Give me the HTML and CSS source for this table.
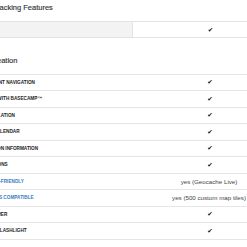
FILE: index.html
```
<!DOCTYPE html>
<html lang="en">
<head>
    <meta charset="UTF-8">
    <meta name="viewport" content="width=device-width, initial-scale=1.0">
    <title>Compare Features</title>
    <link rel="stylesheet" href="styles.css">
</head>
<body>
    <div class="page">
        <h2 class="section-title">Activity Tracking Features</h2>
        <table class="specs specs-boxed">
            <tr>
                <td class="label"></td>
                <td class="value"><span class="check">&#10004;</span></td>
            </tr>
        </table>

        <h2 class="section-title second">Route Creation</h2>
        <table class="specs">
            <tr>
                <td class="label">POINT-TO-POINT NAVIGATION</td>
                <td class="value"><span class="check">&#10004;</span></td>
            </tr>
            <tr>
                <td class="label">PLAN A TRIP WITH BASECAMP&trade;</td>
                <td class="value"><span class="check">&#10004;</span></td>
            </tr>
            <tr>
                <td class="label">AREA CALCULATION</td>
                <td class="value"><span class="check">&#10004;</span></td>
            </tr>
            <tr>
                <td class="label">HUNT/FISH CALENDAR</td>
                <td class="value"><span class="check">&#10004;</span></td>
            </tr>
            <tr>
                <td class="label">SUN AND MOON INFORMATION</td>
                <td class="value"><span class="check">&#10004;</span></td>
            </tr>
            <tr>
                <td class="label">WAYPOINT ICONS</td>
                <td class="value"><span class="check">&#10004;</span></td>
            </tr>
            <tr>
                <td class="label"><a href="#">GEOCACHING-FRIENDLY</a></td>
                <td class="value">yes (Geocache Live)</td>
            </tr>
            <tr>
                <td class="label"><a href="#">CUSTOM MAPS COMPATIBLE</a></td>
                <td class="value">yes (500 custom map tiles)</td>
            </tr>
            <tr>
                <td class="label">PICTURE VIEWER</td>
                <td class="value"><span class="check">&#10004;</span></td>
            </tr>
            <tr>
                <td class="label">BRIGHT LED FLASHLIGHT</td>
                <td class="value"><span class="check">&#10004;</span></td>
            </tr>
        </table>
    </div>
</body>
</html>
```
FILE: styles.css
```
body {
    margin: 0;
    overflow: hidden;
    background: #fff;
    font-family: "Liberation Sans", Arial, sans-serif;
    color: #222;
}
.page {
    margin-left: -41px;
    width: 328px;
}
.section-title {
    margin: 0 0 5px 0;
    padding-left: 8px;
    font-size: 7.5px;
    line-height: 16px;
    font-weight: normal;
    color: #333;
    -webkit-text-stroke: 0.15px #333;
}
.section-title.second {
    margin-top: 14.5px;
}
.specs {
    width: 328px;
    border-collapse: collapse;
    table-layout: fixed;
}
.specs td {
    height: 15.5px;
    padding: 0;
    border-top: 1px solid #e6e6e6;
    border-bottom: 1px solid #e6e6e6;
    vertical-align: middle;
}
.specs-boxed td {
    height: 15px;
    border: 1px solid #e3e3e3;
}
.specs-boxed .label {
    background-color: #f3f3f3;
}
.label {
    width: 164px;
    padding-left: 8px !important;
    font-size: 4.7px;
    font-weight: bold;
    color: #222;
    white-space: nowrap;
}
.label a {
    color: #3d7cc0;
    text-decoration: none;
}
.value {
    text-align: center;
    font-size: 6.2px;
    color: #444;
}
.check {
    display: inline-block;
    margin-left: 2px;
    font-family: "DejaVu Sans", sans-serif;
    font-size: 6.5px;
    color: #111;
}
```
